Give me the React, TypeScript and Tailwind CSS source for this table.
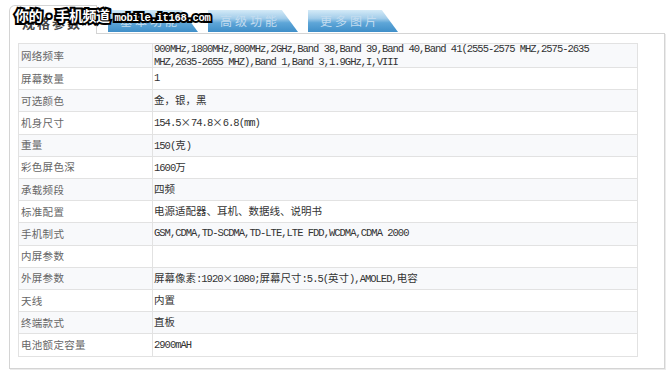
import React from 'react';

type Spec = { label: string; value: string | string[] };

const specs: Spec[] = [
  {
    label: '网络频率',
    value: [
      '900MHz,1800MHz,800MHz,2GHz,Band 38,Band 39,Band 40,Band 41(2555-2575 MHZ,2575-2635',
      'MHZ,2635-2655 MHZ),Band 1,Band 3,1.9GHz,I,VIII',
    ],
  },
  { label: '屏幕数量', value: '1' },
  { label: '可选颜色', value: '金，银，黑' },
  { label: '机身尺寸', value: '154.5×74.8×6.8(mm)' },
  { label: '重量', value: '150(克)' },
  { label: '彩色屏色深', value: '1600万' },
  { label: '承载频段', value: '四频' },
  { label: '标准配置', value: '电源适配器、耳机、数据线、说明书' },
  { label: '手机制式', value: 'GSM,CDMA,TD-SCDMA,TD-LTE,LTE FDD,WCDMA,CDMA 2000' },
  { label: '内屏参数', value: '' },
  { label: '外屏参数', value: '屏幕像素:1920×1080;屏幕尺寸:5.5(英寸),AMOLED,电容' },
  { label: '天线', value: '内置' },
  { label: '终端款式', value: '直板' },
  { label: '电池额定容量', value: '2900mAH' },
];

// latin runs are squeezed to the half-width look, wide chars keep full width
function Mixed({ text }: { text: string }) {
  const parts = text.split(/([\u3000-\u9fff\uff00-\uffef×]+)/);
  return (
    <>
      {parts.map((p, i) =>
        /[\u3000-\u9fff\uff00-\uffef×]/.test(p) ? (
          <span key={i} className="tracking-normal font-['Noto_Sans_CJK_SC',sans-serif]">
            {p}
          </span>
        ) : (
          <span key={i}>{p}</span>
        )
      )}
    </>
  );
}

function BlueTab({ text }: { text: string }) {
  return (
    <div className="w-[90px] h-[22px] mb-px [clip-path:polygon(0_0,82%_0,100%_100%,0_100%)] bg-[linear-gradient(180deg,#d4eaf7_0%,#a3cdea_38%,#5ea6d8_58%,#3f8fc8_100%)] flex items-center pl-[12px]">
      <span className="text-[12px] tracking-[3px] text-[#c3dcef] font-['Noto_Sans_CJK_SC',sans-serif]">
        {text}
      </span>
    </div>
  );
}

export default function App() {
  return (
    <div className="relative w-[670px] h-[372px] bg-white overflow-hidden">
      <div className="pl-[9px] pr-[5px] pt-[4px]">
        {/* tabs */}
        <div className="flex items-end h-[29px]">
          <div className="relative z-10 w-[88px] h-[29px] -mb-px bg-white border border-b-0 border-[#d4d4d4] rounded-tl-[6px] flex items-end pb-[2px] pl-[12px]">
            <span className="text-[13px] font-bold tracking-[2px] text-[#444] font-['Noto_Sans_CJK_SC',sans-serif]">
              规格参数
            </span>
          </div>
          <div className="w-[11px]" />
          <BlueTab text="基本功能" />
          <div className="w-[10px]" />
          <BlueTab text="高级功能" />
          <div className="w-[10px]" />
          <BlueTab text="更多图片" />
        </div>

        {/* panel */}
        <div className="h-[336px] border border-[#d4d4d4] shadow-[1px_1px_0_#ebebeb] pt-[9px] pl-[8px]">
          <div className="w-[620px] border border-[#e2e2e2] font-['Liberation_Mono','Noto_Sans_CJK_SC',monospace] text-[10.5px]">
            {specs.map((s, i) => (
              <div
                key={s.label}
                className={`flex ${i === 0 ? 'h-[24px]' : 'h-[22.2px]'} ${i < specs.length - 1 ? 'border-b border-[#e2e2e2]' : ''} ${i % 2 === 0 ? 'bg-[#f8f9fb]' : 'bg-white'}`}
              >
                <div className="w-[134px] shrink-0 border-r border-[#e2e2e2] flex items-center pl-[2px] text-[#666] font-['Noto_Sans_CJK_SC',sans-serif] tracking-[0.3px]">
                  {s.label}
                </div>
                <div className="flex-1 flex items-center pl-[1px] text-[#333] tracking-[-1px] leading-[13px] whitespace-nowrap">
                  <div>
                    {Array.isArray(s.value)
                      ? s.value.map((line, j) => (
                          <div key={j}>
                            <Mixed text={line} />
                          </div>
                        ))
                      : <Mixed text={s.value} />}
                  </div>
                </div>
              </div>
            ))}
          </div>
        </div>
      </div>

      {/* watermark */}
      <div className="absolute left-[15px] top-[5px] z-20 flex items-baseline gap-[5px] text-white [-webkit-text-stroke:4px_#000] [paint-order:stroke_fill]">
        <span className="text-[14px] font-bold font-['Noto_Sans_CJK_SC',sans-serif] tracking-[-0.5px]">
          你的·手机频道
        </span>
        <span className="text-[10.5px] font-bold font-['Liberation_Mono',monospace] tracking-[-0.3px]">
          mobile.it168.com
        </span>
      </div>
    </div>
  );
}
